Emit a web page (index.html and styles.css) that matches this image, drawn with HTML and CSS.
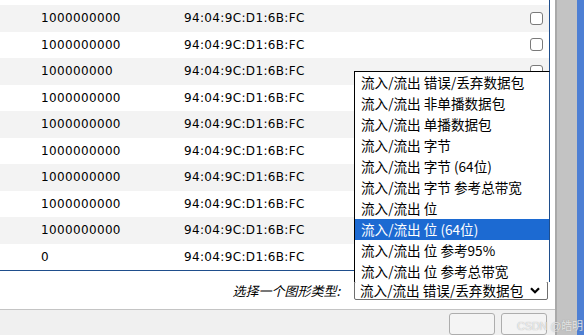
FILE: index.html
```html
<!DOCTYPE html>
<html lang="zh-CN">
<head>
<meta charset="utf-8">
<title>Interfaces</title>
<link rel="stylesheet" href="styles.css">
</head>
<body>
<div class="window">
  <div class="content">
    <div class="grid">
      <div class="row"><span class="speed">1000000000</span><span class="mac">94:04:9C:D1:6B:FC</span><span class="cb"></span></div>
      <div class="row"><span class="speed">1000000000</span><span class="mac">94:04:9C:D1:6B:FC</span><span class="cb"></span></div>
      <div class="row"><span class="speed">100000000</span><span class="mac">94:04:9C:D1:6B:FC</span><span class="cb"></span></div>
      <div class="row"><span class="speed">1000000000</span><span class="mac">94:04:9C:D1:6B:FC</span><span class="cb"></span></div>
      <div class="row"><span class="speed">1000000000</span><span class="mac">94:04:9C:D1:6B:FC</span><span class="cb"></span></div>
      <div class="row"><span class="speed">1000000000</span><span class="mac">94:04:9C:D1:6B:FC</span><span class="cb"></span></div>
      <div class="row"><span class="speed">1000000000</span><span class="mac">94:04:9C:D1:6B:FC</span><span class="cb"></span></div>
      <div class="row"><span class="speed">1000000000</span><span class="mac">94:04:9C:D1:6B:FC</span><span class="cb"></span></div>
      <div class="row"><span class="speed">1000000000</span><span class="mac">94:04:9C:D1:6B:FC</span><span class="cb"></span></div>
      <div class="row"><span class="speed">0</span><span class="mac">94:04:9C:D1:6B:FC</span><span class="cb"></span></div>
    </div>
    <div class="footer">
      <span class="label">选择一个图形类型:</span>
      <div class="select-wrap">
        <ul class="popup">
          <li>流入/流出 错误/丢弃数据包</li>
          <li>流入/流出 非单播数据包</li>
          <li>流入/流出 单播数据包</li>
          <li>流入/流出 字节</li>
          <li>流入/流出 字节 (64位)</li>
          <li>流入/流出 字节 参考总带宽</li>
          <li>流入/流出 位</li>
          <li class="sel">流入/流出 位 (64位)</li>
          <li>流入/流出 位 参考95%</li>
          <li>流入/流出 位 参考总带宽</li>
        </ul>
        <div class="select">
          <span>流入/流出 错误/丢弃数据包</span>
          <svg class="chev" width="10" height="7" viewBox="0 0 10 7"><path d="M1 1.2 L5 5.2 L9 1.2" fill="none" stroke="#000" stroke-width="2.2"/></svg>
        </div>
      </div>
    </div>
    <div class="bottombar">
      <span class="btn"></span>
      <span class="btn"></span>
    </div>
  </div>
  <div class="scroll"></div>
  <div class="edge"></div>
  <span class="watermark">CSDN @皓明</span>
</div>
</body>
</html>
```

FILE: styles.css
```css
html, body {
  margin: 0;
  padding: 0;
  background: #fff;
}
.window {
  position: relative;
  display: flex;
  width: 584px;
  height: 335px;
  overflow: hidden;
}
.content {
  width: 555px;
  border-right: 2px solid #a9a9a9;
  display: flex;
  flex-direction: column;
}
.grid {
  width: 549px;
  padding-top: 5px;
  border-right: 1px solid #1f4e8c;
  border-bottom: 1px solid #1f4e8c;
  font-family: "DejaVu Sans", Verdana, sans-serif;
  font-size: 12px;
  letter-spacing: 0.35px;
  color: #000;
}
.row {
  height: 26.5px;
  display: flex;
  align-items: center;
  padding-left: 41px;
  padding-right: 6px;
}
.row:nth-child(odd) {
  background: #f3f3f3;
}
.speed {
  width: 143px;
}
.mac {
  flex: 1;
}
.cb {
  width: 11px;
  height: 11px;
  border: 1px solid #7a7a7a;
  border-radius: 3px;
  background: #fff;
}
.footer {
  height: 56px;
  display: flex;
  justify-content: flex-end;
  align-items: flex-start;
  padding-right: 7px;
  box-sizing: border-box;
}
.label {
  font-family: "Noto Sans CJK SC", sans-serif;
  font-size: 13px;
  font-style: italic;
  line-height: 19px;
  margin-top: 10px;
  margin-right: 14px;
  color: #000;
}
.select-wrap {
  position: relative;
  width: 194px;
  margin-top: 10px;
}
.select {
  height: 19px;
  border: 1px solid #6e6e6e;
  border-radius: 2px;
  box-sizing: border-box;
  display: flex;
  align-items: center;
  padding-left: 5px;
  padding-right: 7px;
  font-family: "Noto Sans CJK SC", sans-serif;
  font-size: 13.6px;
  background: #fff;
}
.select span {
  flex: 1;
  line-height: 17px;
  white-space: nowrap;
}
.chev {
  display: block;
}
.popup {
  position: absolute;
  left: 0;
  bottom: 18px;
  width: 196px;
  margin: 0;
  padding: 0;
  list-style: none;
  border-top: 1px solid #000;
  border-left: 1px solid #000;
  border-right: 1px solid #1f4e8c;
  background: #fff;
  font-family: "Noto Sans CJK SC", sans-serif;
  font-size: 13.6px;
  box-sizing: border-box;
}
.popup li {
  height: 21px;
  line-height: 21px;
  padding-left: 6px;
  white-space: nowrap;
  color: #000;
}
.popup li.sel {
  background: #1c6ad2;
  color: #fff;
}
.bottombar {
  flex: 1;
  border-top: 1px solid #c4c4c4;
  background: #f0f0f0;
  display: flex;
  justify-content: flex-end;
  align-items: flex-start;
  padding-top: 3px;
  padding-right: 8px;
  gap: 6px;
}
.btn {
  width: 44px;
  height: 20px;
  border: 1px solid #adadad;
  border-radius: 3px;
  background: #f4f4f4;
}
.scroll {
  width: 20px;
  background: #c3c3c3;
}
.edge {
  flex: 1;
  background: #4d7fd4;
}
.watermark {
  position: absolute;
  left: 517px;
  top: 317px;
  font-family: "Liberation Sans", "Noto Sans CJK SC", sans-serif;
  font-size: 11px;
  letter-spacing: -0.2px;
  color: rgba(255, 255, 255, 0.75);
  text-shadow: 0 0 1px rgba(120, 120, 120, 0.7);
  white-space: nowrap;
}
```
